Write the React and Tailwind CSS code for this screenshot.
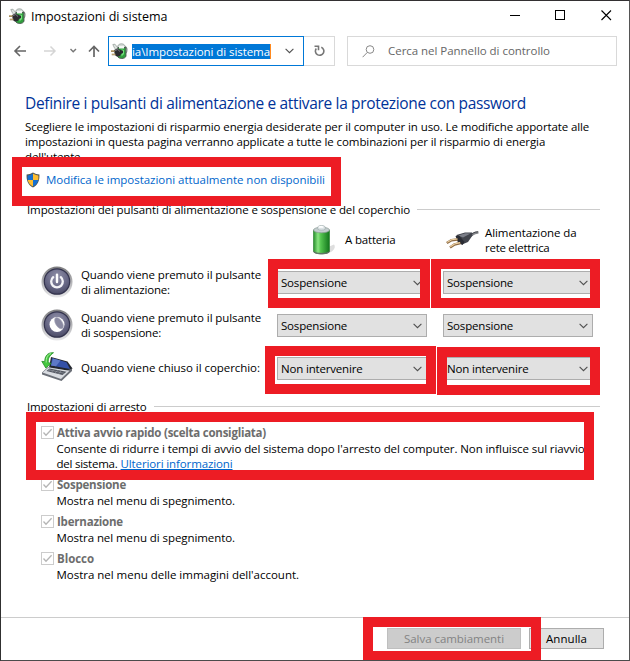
import React from "react";

function PowerIcon() {
  return (
    <svg width="17" height="17" viewBox="0 0 17 17" className="shrink-0">
      <path d="M6.500 5 C6.500 2 8 .8 10.500 .8 C13 .8 14.500 2.500 14.500 5Z" fill="#d3dad6" stroke="#8c9691" strokeWidth=".7" />
      <path d="M14 3.500 C16.500 4 16.500 9.500 14.500 10.500" fill="none" stroke="#7d8882" strokeWidth="1.200" />
      <path d="M1.800 1.500 L4 1.200 L6.500 4.500 L5 6.500 L3.500 5Z" fill="#dfe4e1" stroke="#8f9994" strokeWidth=".7" />
      <path d="M7 4.500 H14.800 L15 13 C14.500 16.300 7 16.300 6.500 13Z" fill="#2f9e3d" stroke="#46534b" strokeWidth=".9" />
      <path d="M8 3 H13 V5.500 H8Z" fill="#f4f7f5" />
      <path d="M10.500 6.300 L13 7 V11 L10.500 13.500Z" fill="#74e07c" />
      <path d="M3 7 L6.500 5.500 L9.500 7 L12 7.800 V10 L10 11 L9 13 L5.800 13.500 L3.800 12Z" fill="#2b2b2f" />
      <path d="M4 7.500 L6.800 6.500 L9 8.500" stroke="#8c8c91" strokeWidth=".8" fill="none" />
      <path d="M0 8.200 H3.500 M.8 11.500 H4.500" stroke="#8f7444" strokeWidth="1.700" />
      <path d="M0 7.900 H3.300 M.8 11.200 H4.200" stroke="#e8d6a5" strokeWidth=".7" />
    </svg>
  );
}

function Shield() {
  return (
    <svg width="14" height="16" viewBox="0 0 14 16" className="mt-px shrink-0">
      <path d="M7 .5 C9 1.800 11 2.500 13.400 2.500 C13.700 8.500 12 13 7 15.500 C2 13 .3 8.500 .6 2.500 C3 2.500 5 1.800 7 .5Z" fill="#51544f" />
      <path d="M6.900 1.600 V8 H1.700 C1.500 6.300 1.500 5 1.600 3.500 C3.500 3.400 5.400 2.600 6.900 1.600Z" fill="#1570d1" />
      <path d="M7 1.600 V8 H12.300 C12.500 6.300 12.500 5 12.400 3.500 C10.500 3.400 8.500 2.600 7 1.600Z" fill="#fdbd31" />
      <path d="M7 8 H1.700 C2.300 10.900 4 13 7 14.500Z" fill="#fdbd31" />
      <path d="M7 8 H12.300 C11.700 10.900 10 13 7 14.500Z" fill="#1570d1" />
    </svg>
  );
}

function RoundButton({ id, children }) {
  return (
    <svg width="32" height="32" viewBox="0 0 32 32" className="-mt-[2px] shrink-0">
      <defs>
        <linearGradient id={id + "rim"} x1="0" y1="0" x2="0" y2="1">
          <stop offset="0" stopColor="#7c7c7e" />
          <stop offset=".5" stopColor="#b2b2b5" />
          <stop offset="1" stopColor="#e8e8ea" />
        </linearGradient>
        <radialGradient id={id + "face"} cx=".5" cy=".3" r=".75">
          <stop offset="0" stopColor="#9090a8" />
          <stop offset=".6" stopColor="#666684" />
          <stop offset="1" stopColor="#45455f" />
        </radialGradient>
      </defs>
      <circle cx="16" cy="16" r="15.500" fill={"url(#" + id + "rim)"} />
      <circle cx="16" cy="15.500" r="12.700" fill={"url(#" + id + "face)"} stroke="#34344e" strokeWidth="1.200" />
      {children}
    </svg>
  );
}

function LaptopIcon() {
  return (
    <svg width="32" height="30" viewBox="0 0 32 30" className="shrink-0">
      <path d="M10 5 L26.500 9.500 L31.500 16.500 L27 20.500 L8 15.500Z" fill="#23262e" />
      <path d="M11 6 L25.500 10.300 L29 17 L10 13.500Z" fill="#3451a8" />
      <path d="M12 6.500 L19.500 8.600 L15 14.300 L10 13.500Z" fill="#5d78c6" />
      <path d="M7 15 L26 18.500 L31 16.500 V19 L20.500 29 L1 22.500 V20.500Z" fill="#6b6f77" />
      <path d="M7.500 15.500 L28.500 18.800 L20 27 L1.500 20.500Z" fill="#d9dce1" />
      <path d="M8.500 16.500 L25.500 19.700 L21.500 23 L5.500 19Z" fill="#50555f" />
      <path d="M7.500 17.800 L23.500 21.300 M9.500 17 L7 19.300 M13 17.600 L10.500 20.200 M16.500 18.300 L14 21.200 M20 19 L17.500 22" stroke="#a9adb5" strokeWidth=".5" />
      <path d="M12.500 .7 C6 .2 3.600 5 3.800 9.700 L.8 9.300 L4.800 16 L10.200 11.300 L7.300 10.700 C6.800 6.500 8.500 3.500 12.500 .7Z" fill="#45c83f" stroke="#228b25" strokeWidth=".8" />
      <path d="M10 1.600 C6.500 2.500 5 6 5.200 10.500" stroke="#b1f2a5" strokeWidth=".9" fill="none" />
    </svg>
  );
}

function BatteryIcon() {
  return (
    <svg width="23" height="30" viewBox="0 0 23 30" className="shrink-0">
      <defs>
        <linearGradient id="cell" x1="0" x2="1">
          <stop offset="0" stopColor="#278f2c" />
          <stop offset=".28" stopColor="#8be582" />
          <stop offset=".45" stopColor="#55c650" />
          <stop offset="1" stopColor="#12751c" />
        </linearGradient>
      </defs>
      <path d="M15 22 L21 19.500 Q23.500 23 18 27 L12 29Z" fill="#dedede" />
      <path d="M.5 5 V26.500 C1.500 29.700 15.500 29.700 16.500 26.500 V5Z" fill="url(#cell)" stroke="#328637" strokeWidth=".7" />
      <path d="M.5 26 C2.500 28.500 14.500 28.500 16.500 26 V27 C15.500 30 1.500 30 .5 27Z" fill="#627267" />
      <ellipse cx="8.500" cy="5" rx="8" ry="2.800" fill="#c5ced0" stroke="#8a9994" strokeWidth=".7" />
      <path d="M4.800 3 V1.800 C6 0 11 0 12.200 1.800 V4.200 C10.500 5.500 6.500 5.500 4.800 4.200Z" fill="#dce3e5" stroke="#9caaa9" strokeWidth=".6" />
      <ellipse cx="8" cy="1.900" rx="2.700" ry=".9" fill="#ffffff" />
    </svg>
  );
}

function PlugIcon() {
  return (
    <svg width="33" height="19" viewBox="0 0 33 19" className="shrink-0">
      <path d="M24 5 C27 3.500 28 1.200 32.500 1.600" stroke="#85878b" strokeWidth="2.400" fill="none" />
      <path d="M24 3.500 C27 2.500 28.500 .8 32 .8" stroke="#494b50" strokeWidth="1" fill="none" />
      <path d="M10.500 4 L19 1.500 L26 1.500 L26.500 4.500 L22 11 L16 13.500 L11.500 10Z" fill="#41444c" />
      <path d="M12 4.500 L19.500 2.300 L24.500 2.500 L17 6.500Z" fill="#7b7e88" />
      <path d="M9.500 5 L13 4.500 L18.500 11 L16.500 14 L12 11.500Z" fill="#2a2c33" />
      <path d="M11.500 8.500 L5.500 9.200 L.8 12" stroke="#8d6a43" strokeWidth="2.600" fill="none" />
      <path d="M14.500 12 L8.500 13.500 L4 16.500" stroke="#8d6a43" strokeWidth="2.600" fill="none" />
      <path d="M11.500 8 L5.500 8.800 L1.200 11.400 M14 11.600 L8.500 13 L4.300 15.800" stroke="#efd3a4" strokeWidth="1.100" fill="none" />
    </svg>
  );
}

function Chevron({ className }) {
  return (
    <svg width="9" height="6" viewBox="0 0 9 6" className={className}>
      <path d="M.6 .8 L4.500 4.700 L8.400 .8" fill="none" stroke="#505050" strokeWidth="1.100" />
    </svg>
  );
}

function Select({ label, tracking }) {
  return (
    <div className="flex h-[23px] w-[150px] items-center justify-between border border-[#adadad] bg-[#e1e1e1] pr-1 pl-[3px]">
      <span className={tracking}>{label}</span>
      <Chevron />
    </div>
  );
}

function Check({ className, label, tracking, children }) {
  return (
    <div className={className}>
      <div className="flex h-[15px] items-center gap-[3px]">
        <svg width="13" height="13" viewBox="0 0 13 13" className="shrink-0">
          <rect x=".5" y=".5" width="12" height="12" fill="#ffffff" stroke="#cccccc" />
          <path d="M2.500 6.500 L5 9.300 L10.600 3.300" fill="none" stroke="#b5b5b5" strokeWidth="1.300" />
        </svg>
        <b className={"text-[#6d6d6d] " + tracking}>{label}</b>
      </div>
      <div className="mt-px pl-[15.500px] leading-[15px] whitespace-nowrap">{children}</div>
    </div>
  );
}

function SectionTitle({ label, tracking, gap }) {
  return (
    <div className={"flex h-[15px] w-[573px] items-center whitespace-nowrap " + gap}>
      <span className={tracking}>{label}</span>
      <span className="h-px flex-1 bg-[#cccccc]" />
    </div>
  );
}

export default function App() {
  return (
    <div className="relative flex h-[661px] w-[630px] flex-col overflow-hidden border border-t-[#333032] border-r-[#555555] border-b-[#4b4b4b] border-l-[#303030] bg-white font-['Open_Sans','Noto_Sans',sans-serif] text-[11.5px] leading-[15px] text-black">
      <header className="flex h-[30px] shrink-0 items-center pl-2">
        <PowerIcon />
        <span className="ml-[5px] text-[12.5px] tracking-[-0.04px]">Impostazioni di sistema</span>
        <svg width="102" height="11" viewBox="0 0 102 11" className="mr-[17px] mb-[2px] ml-auto" fill="none" stroke="#000000">
          <path d="M0 5.500 H10" />
          <rect x="45.500" y=".5" width="9" height="9" />
          <path d="M91.500 .5 L101 10 M101 .5 L91.500 10" strokeWidth="1.100" />
        </svg>
      </header>

      <nav className="flex h-[34px] shrink-0 items-start pt-[5px]">
        <div className="h-[29px] w-[107px] shrink-0">
          <svg width="107" height="29" viewBox="0 0 107 29" fill="none">
            <path d="M25 15 H14 M19 10 L14 15 L19 20" stroke="#666666" strokeWidth="1.600" />
            <path d="M43 15 H54 M49.500 10.500 L54 15 L49.500 19.500" stroke="#d5d5d5" strokeWidth="1.500" />
            <path d="M69.500 13 L72.200 15.700 L75 13" stroke="#777777" strokeWidth="1.400" />
            <path d="M93 21 V10.500 M88 15.500 L93 10.500 L98 15.500" stroke="#666666" strokeWidth="1.700" />
          </svg>
        </div>
        <div className="flex h-[30px] w-[196px] shrink-0 items-center border border-[#0078d7] pr-[9px] pl-[2px]">
          <PowerIcon />
          <span className="ml-[4px] h-[15px] border-r border-[#ff8a1f] bg-[#0078d7] tracking-[-0.07px] whitespace-nowrap text-white">ia\Impostazioni di sistema</span>
          <Chevron className="ml-auto" />
        </div>
        <div className="flex h-[30px] w-[31px] shrink-0 items-center justify-center border border-l-0 border-[#d9d9d9]">
          <svg width="11" height="12" viewBox="0 0 11 12" fill="none" stroke="#777777" strokeWidth="1.600">
            <path d="M7.300 2.200 A4.200 4.200 0 1 1 2.300 3.500" />
            <path d="M.5 1.300 H4.500 V5.300" />
          </svg>
        </div>
        <div className="ml-3 flex h-[30px] w-[270px] shrink-0 items-center border border-[#d9d9d9] pl-[14px]">
          <svg width="13" height="13" viewBox="0 0 13 13" fill="none" stroke="#888888">
            <circle cx="8" cy="4.500" r="3.800" />
            <path d="M5.200 7.500 L.6 12.200" />
          </svg>
          <span className="mb-[2px] ml-[13px] tracking-[-0.036px] text-[#666666]">Cerca nel Pannello di controllo</span>
        </div>
      </nav>

      <main className="h-[552px] shrink-0 pt-[28px] pl-[25px] whitespace-nowrap">
        <h1 className="-ml-px h-5 text-[15.5px] leading-5 tracking-[-0.33px] text-[#003399]">Definire i pulsanti di alimentazione e attivare la protezione con password</h1>
        <p className="mt-[6px] -ml-px h-[45px] leading-[15px]">
          <span className="tracking-[-0.108px]">Scegliere le impostazioni di risparmio energia desiderate per il computer in uso. Le modifiche apportate alle</span>
          <br />
          <span className="tracking-[-0.095px]">impostazioni in questa pagina verranno applicate a tutte le combinazioni per il risparmio di energia</span>
          <br />
          <span className="tracking-[-0.15px]">dell'utente.</span>
        </p>
        <div className="mt-[7px] flex h-4 items-center gap-[6px] text-[#0066cc]">
          <Shield />
          <span className="tracking-[-0.03px]">Modifica le impostazioni attualmente non disponibili</span>
        </div>

        <section className="mt-[15px] pl-px">
          <SectionTitle label="Impostazioni dei pulsanti di alimentazione e sospensione e del coperchio" tracking="tracking-[-0.1px]" gap="gap-[7px]" />
          <div className="flex h-[44px] items-start pt-[8px]">
            <div className="ml-[286px] flex w-[133px] items-start gap-[9px]">
              <BatteryIcon />
              <span className="mt-[7px] tracking-[-0.18px]">A batteria</span>
            </div>
            <div className="flex items-start gap-[6px]">
              <div className="pt-[6px]"><PlugIcon /></div>
              <div className="leading-[15px]">
                <div className="tracking-[-0.085px]">Alimentazione da</div>
                <div className="tracking-[-0.266px]">rete elettrica</div>
              </div>
            </div>
          </div>
          <div className="grid grid-cols-[250px_166px_150px] grid-rows-[43px_43px_43px] items-center">
            <div className="flex items-center gap-2 pl-[14px]">
              <RoundButton id="power">
                <path d="M12.200 11.200 A5.800 5.800 0 1 0 19.800 11.200" fill="none" stroke="#f4f4f8" strokeWidth="2.300" strokeLinecap="round" />
                <path d="M16 8.800 V16" stroke="#ffffff" strokeWidth="2.400" strokeLinecap="round" />
              </RoundButton>
              <div className="mb-[2px]">
                <div className="tracking-[-0.098px]">Quando viene premuto il pulsante</div>
                <div className="tracking-[-0.148px]">di alimentazione:</div>
              </div>
            </div>
            <Select label="Sospensione" tracking="tracking-[-0.186px]" />
            <Select label="Sospensione" tracking="tracking-[-0.186px]" />
            <div className="flex items-center gap-2 pl-[14px]">
              <RoundButton id="sleep">
                <circle cx="16" cy="15.500" r="7.500" fill="#ffffff" />
                <ellipse cx="18" cy="14.200" rx="3.300" ry="6.300" transform="rotate(-32 18 14.200)" fill="#8a8aa2" stroke="#a5a5b8" strokeWidth=".6" />
              </RoundButton>
              <div className="mb-[2px]">
                <div className="tracking-[-0.098px]">Quando viene premuto il pulsante</div>
                <div className="tracking-[-0.212px]">di sospensione:</div>
              </div>
            </div>
            <Select label="Sospensione" tracking="tracking-[-0.186px]" />
            <Select label="Sospensione" tracking="tracking-[-0.186px]" />
            <div className="flex items-center gap-2 pb-[3px] pl-[14px]">
              <LaptopIcon />
              <span className="tracking-[-0.053px]">Quando viene chiuso il coperchio:</span>
            </div>
            <Select label="Non intervenire" tracking="tracking-[-0.176px]" />
            <Select label="Non intervenire" tracking="tracking-[-0.176px]" />
          </div>
        </section>

        <section className="mt-[9px] pl-px">
          <SectionTitle label="Impostazioni di arresto" tracking="tracking-[-0.179px]" gap="gap-[7px]" />
          <div className="pl-[14px]">
            <Check className="mt-[11px] h-[52px]" label="Attiva avvio rapido (scelta consigliata)" tracking="tracking-[-0.245px]">
              <span className="tracking-[-0.087px]">Consente di ridurre i tempi di avvio del sistema dopo l'arresto del computer. Non influisce sul riavvio</span>
              <br />
              <span className="tracking-[-0.235px]">del sistema.</span>{" "}
              <a className="tracking-[-0.119px] text-[#0066cc] underline underline-offset-1">Ulteriori informazioni</a>
            </Check>
            <Check className="h-[37px]" label="Sospensione" tracking="tracking-[-0.227px]">
              <span className="tracking-[-0.075px]">Mostra nel menu di spegnimento.</span>
            </Check>
            <Check className="h-[37px]" label="Ibernazione" tracking="tracking-[-0.203px]">
              <span className="tracking-[-0.075px]">Mostra nel menu di spegnimento.</span>
            </Check>
            <Check className="h-[37px]" label="Blocco" tracking="tracking-[-0.046px]">
              <span className="tracking-[-0.018px]">Mostra nel menu delle immagini dell'account.</span>
            </Check>
          </div>
        </section>
      </main>

      <footer className="flex h-[43px] shrink-0 items-start gap-2 border-t border-[#cccccc] pt-[10px] pl-[386px]">
        <div className="flex h-[21px] w-[134px] items-center justify-center border border-[#bfbfbf] bg-[#cccccc] tracking-[-0.042px] text-[#838383]">Salva cambiamenti</div>
        <div className="flex h-[21px] w-[75px] items-center justify-center border border-[#adadad] bg-[#e1e1e1] tracking-[0.05px]">Annulla</div>
      </footer>

      {/* Highlight frames laid over the window */}
      <div className="absolute top-[156px] left-[11px] h-[49px] w-[329px] border-10 border-[#ed1c24]" />
      <div className="absolute top-[258px] left-[267px] h-[49px] w-[162px] border-10 border-[#ed1c24]" />
      <div className="absolute top-[258px] left-[430px] h-[49px] w-[169px] border-10 border-[#ed1c24]" />
      <div className="absolute top-[345px] left-[264px] h-[48px] w-[171px] border-10 border-[#ed1c24]" />
      <div className="absolute top-[346px] left-[436px] h-[48px] w-[163px] border-10 border-[#ed1c24]" />
      <div className="absolute top-[411px] left-[25px] h-[68px] w-[568px] border-10 border-[#ed1c24]" />
      <div className="absolute top-[616px] left-[362px] h-[44px] w-[178px] border-10 border-[#ed1c24]" />
    </div>
  );
}
